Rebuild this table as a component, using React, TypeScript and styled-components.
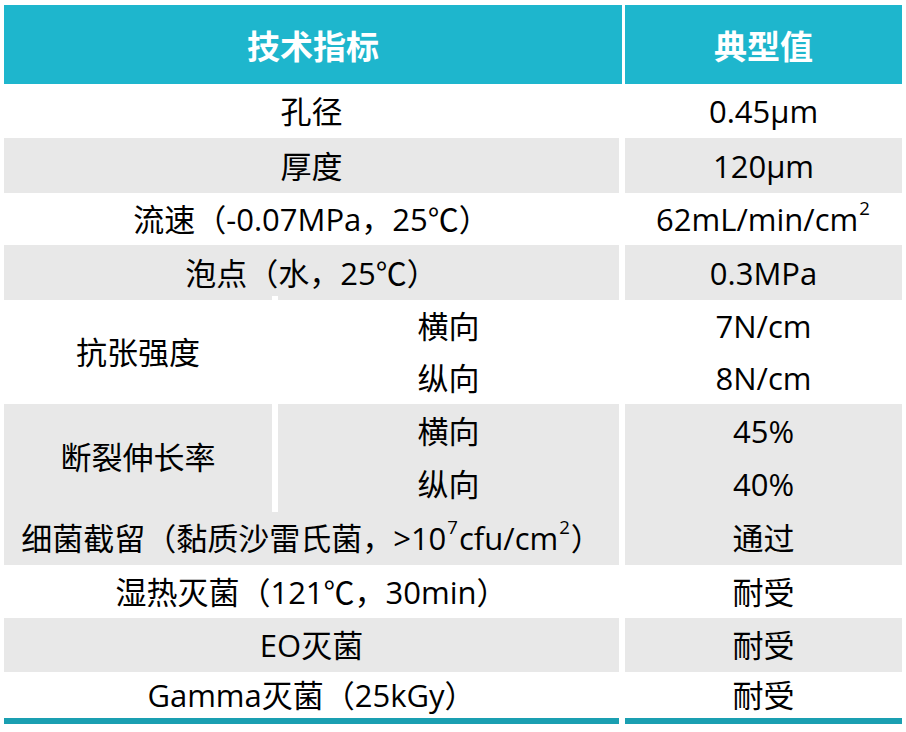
import React from 'react';
import styled, { createGlobalStyle } from 'styled-components';

const GlobalStyle = createGlobalStyle`
    html, body {
        margin: 0;
        padding: 0;
        background: #fff;
    }
    body {
        font-family: 'Open Sans', 'Noto Sans CJK SC', sans-serif;
        color: #000;
    }
`;

const Page = styled.div`
    padding: 5px 0 0 4px;
    width: 898px;
`;

const HeaderRow = styled.div`
    display: grid;
    grid-template-columns: 618px 277px;
    column-gap: 3px;
    height: 79px;
`;

const HeaderCell = styled.div`
    display: flex;
    align-items: center;
    justify-content: center;
    background: #1eb6cd;
    color: #fff;
    font-family: 'Noto Sans CJK SC', sans-serif;
    font-weight: 700;
    font-size: 33px;
`;

const Body = styled.div`
    display: grid;
    grid-template-columns: 268px 341px 277px;
    grid-template-rows: 54px 55px 52px 55px 52px 52px 53px 53px 55px 53px 54px 46px;
    column-gap: 6px;
`;

const Cell = styled.div<{ $shade?: boolean; $col: string; $row: string }>`
    grid-column: ${p => p.$col};
    grid-row: ${p => p.$row};
    display: flex;
    align-items: center;
    justify-content: center;
    background: ${p => (p.$shade ? '#e8e8e8' : '#fff')};
    font-size: 31px;
    line-height: 1;
    white-space: nowrap;
    padding-top: 1px;
`;

const Sup = styled.sup`
    font-size: 0.6em;
    line-height: 0;
    vertical-align: 0;
    position: relative;
    top: -0.6em;
    margin: 0 1px;
`;

// the white rule between the merged label and the sub-items pokes out a few px
const SplitLine = styled.div`
    grid-column: 1;
    grid-row: 5 / 9;
    justify-self: end;
    width: 6px;
    margin-right: -6px;
    margin-top: -4px;
    margin-bottom: -2px;
    background: #fff;
    z-index: 1;
`;

const BottomBar = styled.div`
    display: grid;
    grid-template-columns: 615px 277px;
    column-gap: 6px;
    height: 6px;

    & > div {
        background: #1a9fb1;
    }
`;

type Row = { label: React.ReactNode; value: React.ReactNode; shade: boolean };

const topRows: Row[] = [
    { label: '孔径', value: '0.45μm', shade: false },
    { label: '厚度', value: '120μm', shade: true },
    {
        label: '流速（-0.07MPa，25℃）',
        value: (
            <>
                62mL/min/cm<Sup>2</Sup>
            </>
        ),
        shade: false
    },
    { label: '泡点（水，25℃）', value: '0.3MPa', shade: true }
];

const bottomRows: Row[] = [
    {
        label: (
            <>
                细菌截留（黏质沙雷氏菌，&gt;10<Sup>7</Sup>cfu/cm<Sup>2</Sup>）
            </>
        ),
        value: '通过',
        shade: true
    },
    { label: '湿热灭菌（121℃，30min）', value: '耐受', shade: false },
    { label: 'EO灭菌', value: '耐受', shade: true },
    { label: 'Gamma灭菌（25kGy）', value: '耐受', shade: false }
];

const splitGroups = [
    { label: '抗张强度', items: [['横向', '7N/cm'], ['纵向', '8N/cm']], shade: false },
    { label: '断裂伸长率', items: [['横向', '45%'], ['纵向', '40%']], shade: true }
];

export default function App() {
    return (
        <Page>
            <GlobalStyle />
            <HeaderRow>
                <HeaderCell>技术指标</HeaderCell>
                <HeaderCell>典型值</HeaderCell>
            </HeaderRow>
            <Body>
                {topRows.map((row, i) => (
                    <React.Fragment key={i}>
                        <Cell $shade={row.shade} $col="1 / 3" $row={`${i + 1}`}>
                            {row.label}
                        </Cell>
                        <Cell $shade={row.shade} $col="3" $row={`${i + 1}`}>
                            {row.value}
                        </Cell>
                    </React.Fragment>
                ))}
                {splitGroups.map((group, g) => {
                    const start = 5 + g * 2;
                    return (
                        <React.Fragment key={group.label}>
                            <Cell $shade={group.shade} $col="1" $row={`${start} / ${start + 2}`}>
                                {group.label}
                            </Cell>
                            {group.items.map(([dir, val], k) => (
                                <React.Fragment key={dir}>
                                    <Cell $shade={group.shade} $col="2" $row={`${start + k}`}>
                                        {dir}
                                    </Cell>
                                    <Cell $shade={group.shade} $col="3" $row={`${start + k}`}>
                                        {val}
                                    </Cell>
                                </React.Fragment>
                            ))}
                        </React.Fragment>
                    );
                })}
                <SplitLine />
                {bottomRows.map((row, i) => (
                    <React.Fragment key={i}>
                        <Cell $shade={row.shade} $col="1 / 3" $row={`${i + 9}`}>
                            {row.label}
                        </Cell>
                        <Cell $shade={row.shade} $col="3" $row={`${i + 9}`}>
                            {row.value}
                        </Cell>
                    </React.Fragment>
                ))}
            </Body>
            <BottomBar>
                <div />
                <div />
            </BottomBar>
        </Page>
    );
}
